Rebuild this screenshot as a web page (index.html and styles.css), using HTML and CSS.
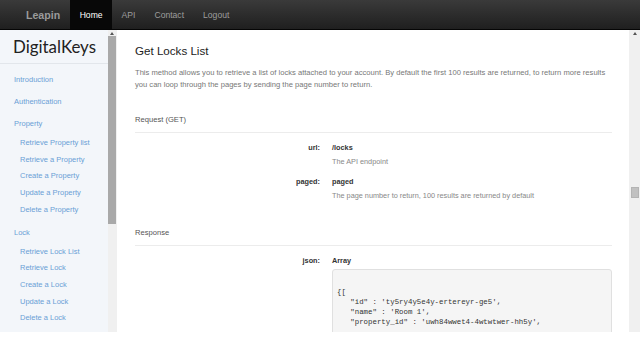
FILE: index.html
```html
<!DOCTYPE html>
<html lang="en">
<head>
    <meta charset="UTF-8">
    <meta name="viewport" content="width=device-width, initial-scale=1.0">
    <title>DigitalKeys | Leapin API</title>
    <link rel="stylesheet" href="styles.css">
</head>
<body>
    <header class="navbar">
        <a href="#" class="brand">Leapin</a>
        <nav class="nav">
            <a href="#" class="nav-link active">Home</a>
            <a href="#" class="nav-link">API</a>
            <a href="#" class="nav-link">Contact</a>
            <a href="#" class="nav-link">Logout</a>
        </nav>
    </header>

    <div class="layout">
        <aside class="sidebar">
            <div class="sidebar-body">
                <div class="sidebar-title">DigitalKeys</div>
                <ul class="side-menu">
                    <li class="side-item"><a href="#">Introduction</a></li>
                    <li class="side-item"><a href="#">Authentication</a></li>
                    <li class="side-item"><a href="#">Property</a>
                        <ul class="side-sub">
                            <li><a href="#">Retrieve Property list</a></li>
                            <li><a href="#">Retrieve a Property</a></li>
                            <li><a href="#">Create a Property</a></li>
                            <li><a href="#">Update a Property</a></li>
                            <li><a href="#">Delete a Property</a></li>
                        </ul>
                    </li>
                    <li class="side-item"><a href="#">Lock</a>
                        <ul class="side-sub">
                            <li><a href="#">Retrieve Lock List</a></li>
                            <li><a href="#">Retrieve Lock</a></li>
                            <li><a href="#">Create a Lock</a></li>
                            <li><a href="#">Update a Lock</a></li>
                            <li><a href="#">Delete a Lock</a></li>
                        </ul>
                    </li>
                </ul>
            </div>
            <div class="scrollbar side-scroll">
                <span class="arrow"></span>
                <span class="thumb"></span>
            </div>
        </aside>

        <main class="main">
            <div class="content">
                <h1 class="page-title">Get Locks List</h1>
                <p class="intro">This method allows you to retrieve a list of locks attached to your account. By default the first 100 results are returned, to return more results you can loop through the pages by sending the page number to return.</p>

                <h2 class="section-title request">Request (GET)</h2>
                <div class="field">
                    <div class="field-label">url:</div>
                    <div class="field-value">
                        <div class="field-name">/locks</div>
                        <div class="field-desc">The API endpoint</div>
                    </div>
                </div>
                <div class="field">
                    <div class="field-label">paged:</div>
                    <div class="field-value">
                        <div class="field-name">paged</div>
                        <div class="field-desc">The page number to return, 100 results are returned by default</div>
                    </div>
                </div>

                <h2 class="section-title response">Response</h2>
                <div class="field">
                    <div class="field-label">json:</div>
                    <div class="field-value">
                        <div class="field-name">Array</div>
<pre class="code">{[
   "id" : 'ty5ry4y5e4y-ertereyr-ge5',
   "name" : 'Room 1',
   "property_id" : 'uwh84wwet4-4wtwtwer-hh5y',</pre>
                    </div>
                </div>
            </div>
            <div class="scrollbar page-scroll">
                <span class="arrow"></span>
                <span class="thumb"></span>
            </div>
        </main>
    </div>
</body>
</html>
```

FILE: styles.css
```css
/* Base */
* {
    margin: 0;
    padding: 0;
    box-sizing: border-box;
}

:root {
    --link: #6a9fd6;
    --text: #333;
    --muted: #888;
    --line: #ececec;
}

body {
    font-family: 'Liberation Sans', Arial, sans-serif;
    background: #fff;
    color: var(--text);
    overflow: hidden;
}

a {
    text-decoration: none;
}

/* Navbar */
.navbar {
    height: 30px;
    display: flex;
    align-items: stretch;
    padding-left: 26px;
    background: linear-gradient(to bottom, #3a3a3a, #1f1f1f);
    border-bottom: 1px solid #050505;
}

.brand {
    display: flex;
    align-items: center;
    padding-right: 10px;
    font-size: 10.6px;
    font-weight: bold;
    color: #9a9a9a;
}

.nav {
    display: flex;
}

.nav-link {
    display: flex;
    align-items: center;
    padding: 0 9.5px;
    font-size: 8.6px;
    color: #9d9d9d;
}

.nav-link.active {
    background: #080808;
    color: #fff;
}

/* Layout */
.layout {
    height: 302px;
    display: flex;
}

/* Sidebar */
.sidebar {
    display: flex;
}

.sidebar-body {
    width: 108px;
    background: #f3f6fa;
}

.sidebar-title {
    height: 34px;
    padding-left: 13px;
    line-height: 33px;
    font-family: Lato, 'Liberation Sans', sans-serif;
    font-size: 16.9px;
    color: #222;
    border-bottom: 1px solid #e2e6eb;
}

.side-menu {
    list-style: none;
    padding-top: 5px;
}

.side-item > a {
    display: block;
    padding-left: 14px;
    line-height: 22px;
    font-size: 7.5px;
    color: var(--link);
}

.side-sub {
    list-style: none;
    margin-bottom: 3px;
}

.side-sub a {
    display: block;
    padding-left: 20px;
    line-height: 16.7px;
    font-size: 7.5px;
    color: var(--link);
}

/* Fake scrollbars */
.scrollbar {
    display: flex;
    flex-direction: column;
    align-items: center;
    background: #f0f0f0;
}

.arrow {
    width: 0;
    height: 0;
    margin-top: 2px;
    border-left: 2.5px solid transparent;
    border-right: 2.5px solid transparent;
    border-bottom: 3px solid #555;
}

.side-scroll {
    width: 9px;
    margin-right: 1px;
    align-items: flex-start;
}

.side-scroll .arrow {
    margin-left: 2px;
}

.side-scroll .thumb {
    width: 8px;
    height: 188px;
    margin-top: 1px;
    background: #a9a9a9;
}

.page-scroll {
    width: 11px;
}

.page-scroll .thumb {
    width: 8px;
    height: 11px;
    margin-top: 152px;
    background: #c1c1c1;
    border: 1px solid #b4b4b4;
}

/* Main */
.main {
    flex: 1;
    display: flex;
    min-width: 0;
}

.content {
    flex: 1;
    overflow: hidden;
    padding: 12px 17px 0;
}

.page-title {
    font-size: 11.6px;
    font-weight: normal;
    line-height: 17px;
    color: #222;
}

.intro {
    margin-top: 8px;
    font-size: 7.6px;
    line-height: 12px;
    color: #777;
}

.section-title {
    font-size: 7.6px;
    font-weight: normal;
    line-height: 14px;
    color: #555;
    padding-bottom: 5px;
    border-bottom: 1px solid var(--line);
}

.section-title.request {
    margin-top: 22px;
}

.section-title.response {
    margin-top: 24px;
}

.field {
    display: grid;
    grid-template-columns: 185px 1fr;
    column-gap: 12px;
    margin-top: 9px;
    font-size: 7.3px;
}

.field + .field {
    margin-top: 8px;
}

.field-label {
    text-align: right;
    font-weight: bold;
    line-height: 12px;
    color: #333;
}

.field-name {
    font-weight: bold;
    line-height: 12px;
    color: #333;
}

.field-desc {
    margin-top: 2px;
    line-height: 12px;
    color: var(--muted);
}

.code {
    margin-top: 2px;
    padding: 17px 4px 40px;
    font-family: 'Liberation Mono', 'DejaVu Sans Mono', monospace;
    font-size: 7.4px;
    line-height: 10px;
    color: #333;
    background: #f5f5f5;
    border: 1px solid #e0e0e0;
    border-radius: 3px;
}
```
